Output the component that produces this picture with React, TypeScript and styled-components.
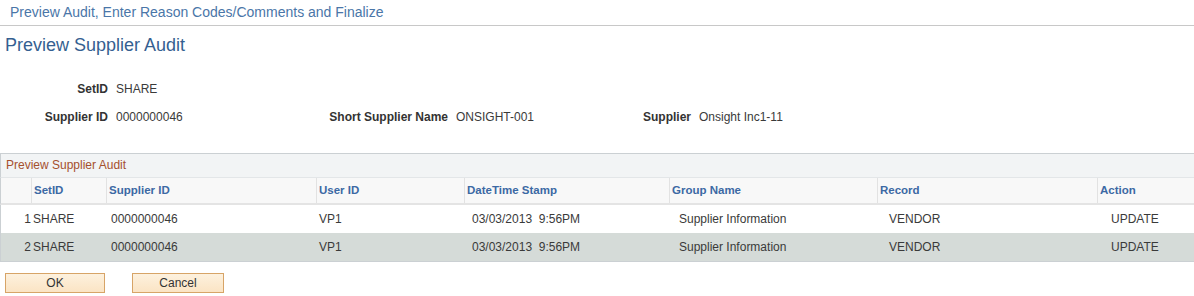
import React from "react";
import styled, { createGlobalStyle } from "styled-components";

const GlobalStyle = createGlobalStyle`
  html, body {
    margin: 0;
    padding: 0;
    background: #ffffff;
    font-family: "Liberation Sans", Arial, sans-serif;
  }
`;

const Page = styled.div`
  width: 1194px;
  height: 296px;
  overflow: hidden;
  background: #fff;
`;

const Breadcrumb = styled.div`
  height: 25px;
  line-height: 24px;
  padding-left: 10px;
  font-size: 14px;
  color: #4a76a8;
  border-bottom: 1px solid #c8c8c8;
`;

const Title = styled.h1`
  margin: 0;
  padding: 7px 0 0 5px;
  height: 32px;
  font-size: 18px;
  font-weight: normal;
  color: #355f91;
  line-height: 24px;
`;

const Fields = styled.div`
  padding-top: 14px;
  display: flex;
  flex-direction: column;
  gap: 8px;
`;

const FieldRow = styled.div`
  display: flex;
  height: 20px;
  align-items: center;
`;

const Field = styled.div<{ $labelWidth: number; $width: number }>`
  display: flex;
  width: ${(p) => p.$width}px;
  font-size: 12px;
  color: #3a3a3a;

  & > b {
    width: ${(p) => p.$labelWidth}px;
    text-align: right;
    font-weight: bold;
    color: #333;
    padding-right: 8px;
    box-sizing: border-box;
  }
`;

const Grid = styled.div`
  margin-top: 26px;
  border: 1px solid #cbd0d3;
  border-left-width: 0;
  border-right: none;
  width: 1194px;
  box-sizing: border-box;
  box-shadow: inset 1px 0 0 #cbd0d3;
`;

const GridTitle = styled.div`
  height: 23px;
  line-height: 23px;
  background: #f2f4f5;
  color: #a5502e;
  font-size: 12px;
  padding-left: 5px;
  border-bottom: 1px solid #e3e6e8;
  border-left: 1px solid #cbd0d3;
`;

const GridRow = styled.div<{ $bg: string }>`
  display: grid;
  grid-template-columns: 30px 75px 210px 148px 205px 208px 220px 1fr;
  background: ${(p) => p.$bg};
  font-size: 12px;
  border-left: 1px solid #cbd0d3;
`;

const HeadRow = styled(GridRow)`
  height: 25px;
  border-bottom: 2px solid #e4e4e4;
`;

const HeadCell = styled.div`
  border-left: 1px solid #e2e2e2;
  padding-left: 2px;
  line-height: 25px;
  font-weight: bold;
  font-size: 11.5px;
  color: #3c69a4;
  &:first-child {
    border-left: none;
  }
`;

const Cell = styled.div<{ $pad: number; $right?: boolean }>`
  height: 28px;
  line-height: 28px;
  padding-left: ${(p) => p.$pad}px;
  text-align: ${(p) => (p.$right ? "right" : "left")};
  color: #3a3a3a;
  white-space: pre;
`;

const Buttons = styled.div`
  display: flex;
  gap: 27px;
  padding: 11px 0 0 5px;
`;

const Button = styled.button<{ $width: number }>`
  width: ${(p) => p.$width}px;
  height: 20px;
  border: 1px solid #d7a467;
  border-radius: 0;
  background: linear-gradient(#fdf1de, #fbe4c4);
  font-family: "Liberation Sans", Arial, sans-serif;
  font-size: 12px;
  color: #333;
  padding: 0;
`;

const headers = ["", "SetID", "Supplier ID", "User ID", "DateTime Stamp", "Group Name", "Record", "Action"];
const pads = [0, 2, 5, 3, 8, 10, 12, 14];

const rows = [
  ["1", "SHARE", "0000000046", "VP1", "03/03/2013  9:56PM", "Supplier Information", "VENDOR", "UPDATE"],
  ["2", "SHARE", "0000000046", "VP1", "03/03/2013  9:56PM", "Supplier Information", "VENDOR", "UPDATE"],
];

export default function App() {
  return (
    <Page>
      <GlobalStyle />
      <Breadcrumb>Preview Audit, Enter Reason Codes/Comments and Finalize</Breadcrumb>
      <Title>Preview Supplier Audit</Title>
      <Fields>
        <FieldRow>
          <Field $labelWidth={116} $width={300}>
            <b>SetID</b>
            <span>SHARE</span>
          </Field>
        </FieldRow>
        <FieldRow>
          <Field $labelWidth={116} $width={300}>
            <b>Supplier ID</b>
            <span>0000000046</span>
          </Field>
          <Field $labelWidth={156} $width={310}>
            <b>Short Supplier Name</b>
            <span>ONSIGHT-001</span>
          </Field>
          <Field $labelWidth={89} $width={300}>
            <b>Supplier</b>
            <span>Onsight Inc1-11</span>
          </Field>
        </FieldRow>
      </Fields>
      <Grid>
        <GridTitle>Preview Supplier Audit</GridTitle>
        <HeadRow $bg="#f8f8f8">
          {headers.map((h, i) => (
            <HeadCell key={i}>{h}</HeadCell>
          ))}
        </HeadRow>
        {rows.map((r, ri) => (
          <GridRow key={ri} $bg={ri % 2 === 0 ? "#ffffff" : "#d5dbd8"}>
            {r.map((c, ci) => (
              <Cell key={ci} $pad={pads[ci]} $right={ci === 0}>
                {c}
              </Cell>
            ))}
          </GridRow>
        ))}
      </Grid>
      <Buttons>
        <Button $width={100}>OK</Button>
        <Button $width={92}>Cancel</Button>
      </Buttons>
    </Page>
  );
}
